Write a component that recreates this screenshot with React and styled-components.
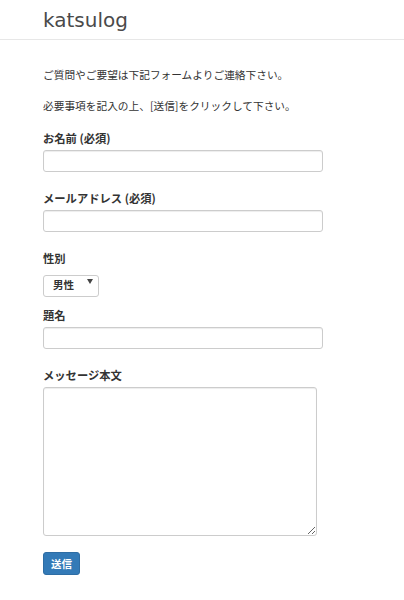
import React from 'react';
import styled, { createGlobalStyle } from 'styled-components';

const GlobalStyle = createGlobalStyle`
  html, body {
    margin: 0;
    padding: 0;
    background: #fff;
  }
  body {
    font-family: "Noto Sans CJK JP", "DejaVu Sans", sans-serif;
    color: #333;
  }
  * {
    box-sizing: border-box;
  }
`

const Navbar = styled.header`
  height: 40px;
  border-bottom: 1px solid #e7e7e7;
  padding-left: 43px;
  display: flex;
  align-items: center;
`
const Brand = styled.span`
  font-family: "DejaVu Sans", Verdana, sans-serif;
  font-size: 20px;
  color: #4a4a4a;
  line-height: 1;
`
const Container = styled.main`
  padding: 27px 0 40px 43px;
`
const Lead = styled.p`
  margin: 0 0 16px;
  font-size: 10.7px;
  line-height: 15px;
  &:last-of-type {
    margin-bottom: 18px;
  }
`
const Form = styled.form`
  display: flex;
  flex-direction: column;
  align-items: flex-start;
`
const Group = styled.div`
  display: flex;
  flex-direction: column;
  align-items: flex-start;
  gap: 4px;
  margin-bottom: ${p => p.$gap || 19}px;
`
const Label = styled.label`
  font-size: 11.3px;
  line-height: 15px;
  font-weight: bold;
  color: #333;
`
const TextInput = styled.input`
  width: 280px;
  height: 22px;
  border: 1px solid #ccc;
  border-radius: 3px;
  box-shadow: inset 0 1px 1px rgba(0, 0, 0, 0.075);
  padding: 2px 6px;
  font-size: 10px;
  font-family: inherit;
  outline: none;
`
const SelectWrap = styled.div`
  position: relative;
  width: 56px;
  height: 22px;
  &:after {
    content: '';
    position: absolute;
    right: 6px;
    top: 9px;
    border-style: solid;
    border-width: 5px 3px 0 3px;
    border-color: #444 transparent transparent transparent;
    pointer-events: none;
  }
`
const Select = styled.select`
  appearance: none;
  width: 100%;
  height: 100%;
  border: 1px solid #ccc;
  border-radius: 3px;
  background: #fff;
  padding: 0 0 2px 9px;
  font-size: 10.5px;
  font-weight: bold;
  font-family: inherit;
  color: #333;
  outline: none;
`
const TextArea = styled.textarea`
  display: block;
  width: 274px;
  height: 149px;
  border: 1px solid #ccc;
  border-radius: 3px;
  box-shadow: inset 0 1px 1px rgba(0, 0, 0, 0.075);
  padding: 4px 6px;
  font-size: 10px;
  font-family: inherit;
  outline: none;
`
const SubmitButton = styled.button`
  width: 37px;
  height: 23px;
  background: #337ab7;
  border: 1px solid #2e6da4;
  border-radius: 3px;
  color: #fff;
  font-size: 10.5px;
  font-weight: bold;
  font-family: inherit;
  padding: 0;
  cursor: pointer;
`

export default function App() {
  return (
    <>
      <GlobalStyle />
      <Navbar>
        <Brand>katsulog</Brand>
      </Navbar>
      <Container>
        <Lead>ご質問やご要望は下記フォームよりご連絡下さい。</Lead>
        <Lead>必要事項を記入の上、[送信]をクリックして下さい。</Lead>
        <Form onSubmit={e => e.preventDefault()}>
          <Group>
            <Label>お名前 (必須)</Label>
            <TextInput type="text" />
          </Group>
          <Group>
            <Label>メールアドレス (必須)</Label>
            <TextInput type="email" />
          </Group>
          <Group $gap={16}>
            <Label>性別</Label>
            <SelectWrap>
              <Select defaultValue="male">
                <option value="male">男性</option>
                <option value="female">女性</option>
              </Select>
            </SelectWrap>
          </Group>
          <Group>
            <Label>題名</Label>
            <TextInput type="text" />
          </Group>
          <Group $gap={16}>
            <Label>メッセージ本文</Label>
            <TextArea />
          </Group>
          <SubmitButton type="submit">送信</SubmitButton>
        </Form>
      </Container>
    </>
  );
}
